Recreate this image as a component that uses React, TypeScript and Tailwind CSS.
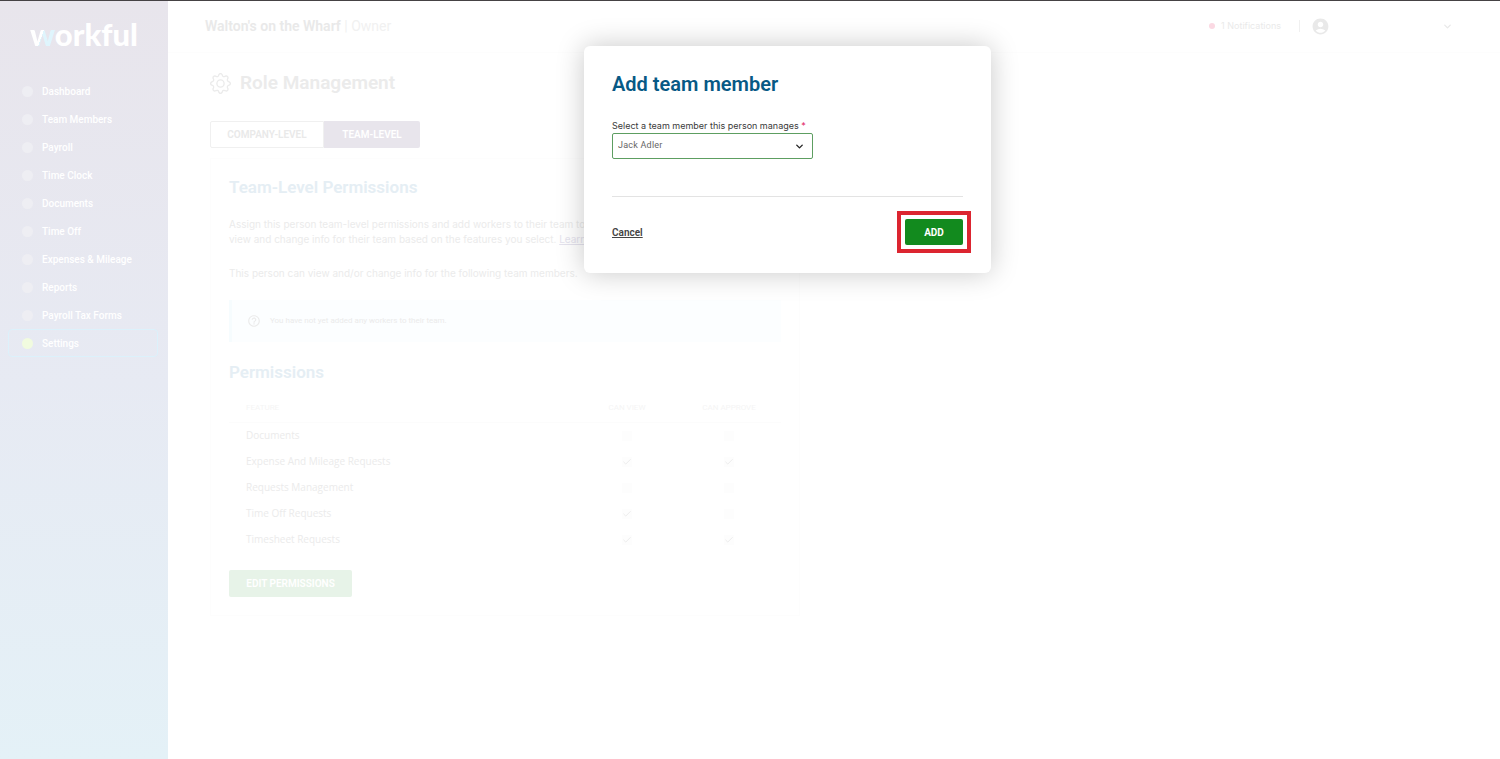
import React, { useState } from 'react';
import { BsGear } from 'react-icons/bs';
import { MdAccountCircle, MdHelpOutline } from 'react-icons/md';
import { Check, ChevronDown } from 'lucide-react';

const navItems = [
  'Dashboard',
  'Team Members',
  'Payroll',
  'Time Clock',
  'Documents',
  'Time Off',
  'Expenses & Mileage',
  'Reports',
  'Payroll Tax Forms',
  'Settings',
];

const permissions = [
  { feature: 'Documents', view: false, approve: false },
  { feature: 'Expense And Mileage Requests', view: true, approve: true },
  { feature: 'Requests Management', view: false, approve: false },
  { feature: 'Time Off Requests', view: true, approve: false },
  { feature: 'Timesheet Requests', view: true, approve: true },
];

function Logo() {
  return (
    <a
      href="#"
      className="block pt-[13px] pl-[30px] font-[Lato,sans-serif] text-[31px] leading-10 font-black text-white"
    >
      <span className="bg-linear-110 from-white from-50% to-[#dff5fd] to-50% bg-clip-text text-transparent">w</span>
      orkful
    </a>
  );
}

function Sidebar() {
  return (
    <aside className="w-42 shrink-0 bg-linear-to-b from-[#e8e5ec] via-[#e7eaf3] to-[#e4f1f7]">
      <Logo />
      <nav className="mt-[23px] pr-[10px] pl-2">
        {navItems.map((item) => (
          <a
            key={item}
            href="#"
            className={
              item === 'Settings'
                ? 'flex h-7 items-center gap-[9px] rounded border border-[#dcf1fb] px-[13px] text-[10px] font-medium text-white'
                : 'flex h-7 items-center gap-[9px] rounded border border-transparent px-[13px] text-[10px] font-medium text-white'
            }
          >
            <span
              className={
                item === 'Settings' ? 'size-[11px] rounded-full bg-[#f1fbdf]' : 'size-[11px] rounded-full bg-[#eeeef3]'
              }
            />
            {item}
          </a>
        ))}
      </nav>
    </aside>
  );
}

function Header() {
  return (
    <header className="flex h-13 items-center justify-between border-b border-[#fdfdfd] pr-[47px] pb-px pl-[37px]">
      <p className="text-sm text-[#f1f1f1]">
        <span className="font-semibold text-[#e9e9e9]">Walton's on the Wharf</span> | Owner
      </p>
      <div className="flex items-center">
        <button className="flex items-center gap-[6px] font-[Inter,sans-serif] text-[9px] text-[#eaeaea]">
          <span className="size-[6px] rounded-full bg-[#fbd9e3]" />
          1 Notifications
        </button>
        <span className="mr-[11px] ml-[18px] h-3 border-l border-[#f0f0f0]" />
        <button aria-label="Account" className="flex items-center gap-28 text-[#e9e9e9]">
          <MdAccountCircle size={19} />
          <ChevronDown size={11} strokeWidth={3} />
        </button>
      </div>
    </header>
  );
}

function PermissionBox({ label, checked }: { label: string; checked: boolean }) {
  return (
    <span className="inline-grid size-[10px] place-items-center bg-[#fdfdfd] align-middle">
      <input
        type="checkbox"
        aria-label={label}
        checked={checked}
        disabled
        className="col-start-1 row-start-1 size-[10px] appearance-none"
      />
      {checked && <Check size={10} className="col-start-1 row-start-1 text-[#e9e9e9]" />}
    </span>
  );
}

function PermissionsTable() {
  return (
    <table className="mt-[11px] w-full table-fixed">
      <thead>
        <tr className="h-[27px] border-b border-[#fcfcfc] text-[8px] text-[#f5f5f5]">
          <th className="pl-[17px] text-left font-normal">FEATURE</th>
          <th className="w-[100px] font-normal">CAN VIEW</th>
          <th className="w-[104px] font-normal">CAN APPROVE</th>
        </tr>
      </thead>
      <tbody>
        {permissions.map((row) => (
          <tr key={row.feature} className="h-[26px] text-center">
            <td className="pl-[17px] text-left font-['Open_Sans',sans-serif] text-[10px] text-[#ebebeb]">
              {row.feature}
            </td>
            <td>
              <PermissionBox label={`${row.feature}: can view`} checked={row.view} />
            </td>
            <td>
              <PermissionBox label={`${row.feature}: can approve`} checked={row.approve} />
            </td>
          </tr>
        ))}
      </tbody>
    </table>
  );
}

function RoleManagement() {
  return (
    <main className="px-[42px] pt-4">
      <h1 className="flex items-center gap-[9px] text-[19px] leading-7 font-semibold text-[#ebebeb]">
        <BsGear size={21} />
        Role Management
      </h1>

      <div className="mt-6 flex text-[10px] font-semibold">
        <button className="h-[27px] w-[114px] rounded-l-xs border border-[#f0f0f0] text-[#e9e9e9]">
          COMPANY-LEVEL
        </button>
        <button className="h-[27px] w-24 rounded-r-xs bg-[#e8e5ec] text-white">TEAM-LEVEL</button>
      </div>

      <section className="mt-[10px] w-full max-w-[590px] border border-[#fdfdfd] px-[18px] pt-4 pb-[18px]">
        <h2 className="text-[17px] leading-6 font-semibold text-[#e5eef4]">Team-Level Permissions</h2>
        <div className="mt-[18px] font-[Inter,sans-serif] text-[10px] leading-[15px] text-[#ebebeb]">
          <p>
            Assign this person team-level permissions and add workers to their team to
            <br />
            view and change info for their team based on the features you select.{' '}
            <a href="#" className="text-[#e5e3ee] underline">
              Learn more
            </a>
          </p>
          <p className="mt-[19px]">This person can view and/or change info for the following team members.</p>
        </div>

        <div className="mt-[19px] flex h-[42px] items-center gap-[9px] border-l-3 border-[#f6fcfe] bg-[#fcfeff] pl-[15px] text-[8px] text-[#ebebeb]">
          <MdHelpOutline size={14} />
          You have not yet added any workers to their team.
        </div>

        <h2 className="mt-[18px] text-[17px] leading-6 font-semibold text-[#e5eef4]">Permissions</h2>
        <PermissionsTable />
        <button className="mt-[18px] h-[27px] w-[123px] rounded-xs bg-[#e7f3e8] text-[10px] font-semibold text-white">
          EDIT PERMISSIONS
        </button>
      </section>
    </main>
  );
}

function AddMemberModal() {
  const [member, setMember] = useState('Jack Adler');

  return (
    <div className="absolute inset-x-0 top-[45px] flex justify-center pl-[75px]">
      <div
        role="dialog"
        aria-labelledby="modal-title"
        className="w-full max-w-[407px] rounded-md bg-white px-7 pt-6 pb-7 shadow-[0_0_28px_rgba(0,0,0,0.22)]"
      >
        <h2 id="modal-title" className="text-xl leading-7 font-semibold text-[#075985]">
          Add team member
        </h2>

        <label
          htmlFor="member"
          className="mt-5 block font-[Inter,sans-serif] text-[9px] leading-[15px] text-[#3a3a3a]"
        >
          Select a team member this person manages <span className="text-[#e0245e]">*</span>
        </label>
        <div className="grid w-[201px] items-center">
          <select
            id="member"
            value={member}
            onChange={(e) => setMember(e.target.value)}
            className="col-start-1 row-start-1 h-[26px] appearance-none rounded-xs border border-[#5d9e61] bg-white px-[5px] text-[9px] tracking-wide text-[#666666]"
          >
            <option>Jack Adler</option>
          </select>
          <ChevronDown
            size={11}
            strokeWidth={3}
            className="pointer-events-none col-start-1 row-start-1 mr-2 justify-self-end text-[#222222]"
          />
        </div>

        <div className="mt-[37px] flex items-center justify-between border-t border-[#e3e3e3] pt-[22px]">
          <button className="text-[10px] font-semibold text-[#444444] underline">Cancel</button>
          <div className="relative">
            <button className="block h-[26px] w-[58px] rounded-xs bg-[#128a1e] text-[10px] font-bold text-white">
              ADD
            </button>
            <span className="pointer-events-none absolute -inset-2 border-4 border-[#dc2530]" />
          </div>
        </div>
      </div>
    </div>
  );
}

export default function App() {
  return (
    <div className="relative flex min-h-screen border-t border-[#454244] bg-white font-[Roboto,sans-serif]">
      <Sidebar />
      <div className="min-w-0 flex-1">
        <Header />
        <RoleManagement />
      </div>
      <AddMemberModal />
    </div>
  );
}
